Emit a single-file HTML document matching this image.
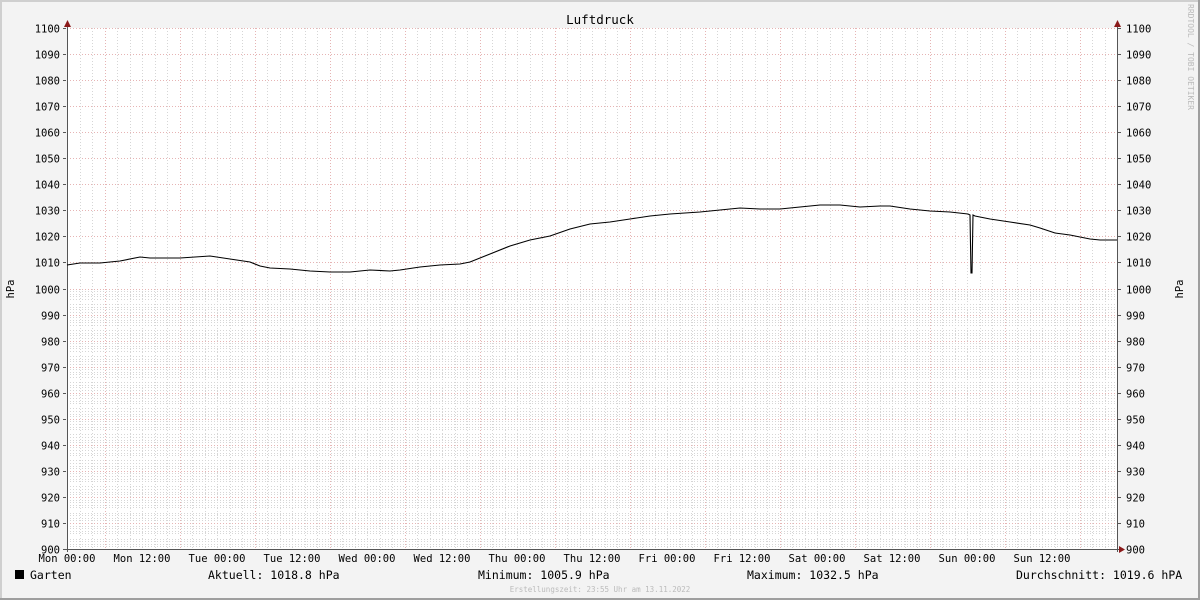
<!DOCTYPE html>
<html><head><meta charset="utf-8"><style>
body{margin:0;width:1200px;height:600px;overflow:hidden;background:#f3f3f3}
svg{display:block}
text{font-family:"DejaVu Sans Mono","Liberation Mono",monospace;font-size:10.5px;fill:#000}
</style></head><body>
<svg width="1200" height="600" xmlns="http://www.w3.org/2000/svg">
<rect x="0" y="0" width="1200" height="600" fill="#f3f3f3"/>
<path d="M1 599V1H1199" stroke="#cfcfcf" stroke-width="2" fill="none"/>
<path d="M0 599H1199V0" stroke="#9e9e9e" stroke-width="2" fill="none"/>
<rect x="67" y="28" width="1050" height="521" fill="#fff"/>
<g id="g"></g>
<text x="600" y="24" text-anchor="middle" style="font-size:12.5px">Luftdruck</text>
<text x="1188" y="4" transform="rotate(90 1188 4)" style="font-size:8px;fill:#bbb">RRDTOOL / TOBI OETIKER</text>
<text x="14" y="289" transform="rotate(-90 14 289)" text-anchor="middle">hPa</text>
<text x="1183" y="289" transform="rotate(-90 1183 289)" text-anchor="middle">hPa</text>
<rect x="15" y="570" width="9" height="9" fill="#000"/>
<text x="30" y="579" style="font-size:11.5px">Garten</text>
<text x="208" y="579" style="font-size:11.5px">Aktuell: 1018.8 hPa</text>
<text x="478" y="579" style="font-size:11.5px">Minimum: 1005.9 hPa</text>
<text x="747" y="579" style="font-size:11.5px">Maximum: 1032.5 hPa</text>
<text x="1016" y="579" style="font-size:11.5px">Durchschnitt: 1019.6 hPA</text>
<text x="600" y="592" text-anchor="middle" style="font-size:7.5px;fill:#bbb">Erstellungszeit: 23:55 Uhr am 13.11.2022</text>
</svg>
<script>
var g=document.getElementById("g"),s="";
function L(x1,y1,x2,y2,c,d){s+='<line x1="'+x1+'" y1="'+y1+'" x2="'+x2+'" y2="'+y2+'" stroke="'+c+'" stroke-width="1"'+(d?' stroke-dasharray="1,2"':'')+'/>';}
for(var i=0;i<=100;i++){var y=549-i*2.605;y=Math.round(y)+0.5;if(i%5)L(67,y,1117,y,"#d6d6d6",1);}
for(var i=1;i<84;i++){var x=Math.round(67+i*12.5)+0.5;if((i-3)%6)L(x,28,x,549,"#d6d6d6",1);}
for(var i=0;i<=20;i++){var y=Math.round(549-i*26.05)+0.5;L(63,y,66,y,"#555");L(1118,y,1121,y,"#555");L(67,y,1117,y,"#e6b4b4",1);
s+='<text x="60" y="'+(y+4)+'" text-anchor="end">'+(900+i*10)+'</text><text x="1126" y="'+(y+4)+'">'+(900+i*10)+'</text>';}
var lab=["Mon 00:00","Mon 12:00","Tue 00:00","Tue 12:00","Wed 00:00","Wed 12:00","Thu 00:00","Thu 12:00","Fri 00:00","Fri 12:00","Sat 00:00","Sat 12:00","Sun 00:00","Sun 12:00"];
for(var i=0;i<14;i++){var x=Math.round(104.5+i*75)+0.5;if(x<1117)L(x,28,x,549,"#e6b4b4",1);
var lx=67+i*75;s+='<text x="'+lx+'" y="562" text-anchor="middle">'+lab[i]+'</text>';}
L(67.5,24,67.5,552,"#555");L(1117.5,24,1117.5,552,"#555");L(63,549.5,1121,549.5,"#555");
s+='<path d="M64 27L67.5 20L71 27Z" fill="#8b1a1a"/><path d="M1114 27L1117.5 20L1121 27Z" fill="#8b1a1a"/><path d="M1119 546L1125 549.5L1119 553Z" fill="#8b1a1a"/>';
var p=[[67,265],[80,263],[100,263],[120,261],[140,257],[150,258],[180,258],[210,256],[230,259],[250,262],[260,266],[270,268],[290,269],[310,271],[330,272],[350,272],[370,270],[390,271],[400,270],[420,267],[440,265],[460,264],[470,262],[490,254],[510,246],[530,240],[550,236],[570,229],[590,224],[610,222],[630,219],[650,216],[670,214],[700,212],[720,210],[740,208],[760,209],[780,209],[800,207],[820,205],[840,205],[860,207],[880,206],[890,206],[910,209],[930,211],[950,212],[968,214],[970,215],[971,273],[972,273],[973,215],[975,216],[990,219],[1010,222],[1030,225],[1040,228],[1055,233],[1070,235],[1090,239],[1100,240],[1117,240]];
s+='<polyline fill="none" stroke="#000" stroke-width="1.1" points="'+p.map(function(a){return a.join(",")}).join(" ")+'"/>';
g.innerHTML=s;
</script>
</body></html>
